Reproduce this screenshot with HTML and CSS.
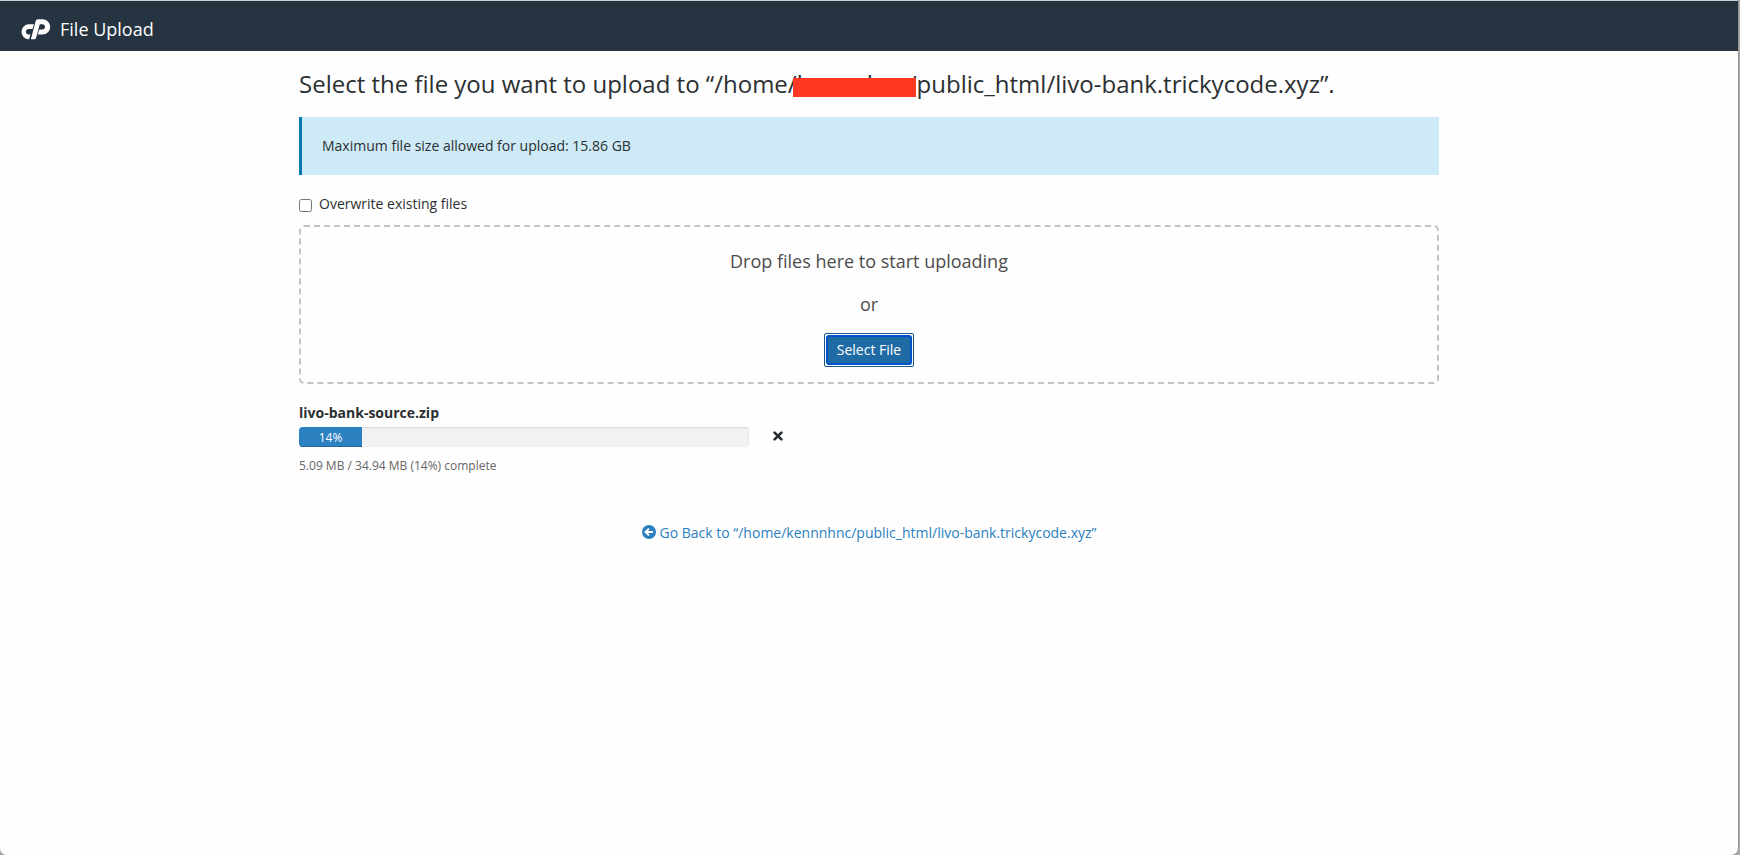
FILE: index.html
```html
<!DOCTYPE html>
<html lang="en">
<head>
<meta charset="utf-8">
<title>File Upload</title>
<link rel="stylesheet" href="styles.css">
</head>
<body>
<div class="window">
  <header class="topbar">
    <svg class="logo" width="31" height="21" viewBox="0 0 31 21" fill="#fff">
      <path d="M8.3 5.2H14L12.8 9.2Q12.5 10.1 11.6 10.1H8.6A2.6 2.6 0 0 0 8.6 15.4H10.4L9.3 19.4Q9 20.3 8.1 20.3A7.6 7.6 0 0 1 8.3 5.2Z"/>
      <path d="M10.9 20.3 15.7 2Q16.2.3 17.9.3H22.6A7.6 7.6 0 0 1 22.6 15.5H17.8L18.9 11.3Q19.1 10.4 20.1 10.4H22.4A2.5 2.5 0 0 0 22.4 5.3H19.8L16.1 18.8Q15.7 20.3 14.2 20.3Z"/>
    </svg>
    <span class="topbar-title">File Upload</span>
  </header>
  <main class="container">
    <h1 class="heading">Select the file you want to upload to “/home/<span class="redacted">kennnhnc</span>/public_html/livo-bank.trickycode.xyz”.</h1>
    <div class="alert">Maximum file size allowed for upload: 15.86 GB</div>
    <label class="overwrite"><input class="checkbox" type="checkbox"><span>Overwrite existing files</span></label>
    <section class="dropzone">
      <p class="drop-text">Drop files here to start uploading</p>
      <p class="drop-text">or</p>
      <button class="select-btn" type="button"><span class="select-face">Select File</span></button>
    </section>
    <section class="upload">
      <div class="filename">livo-bank-source.zip</div>
      <div class="progress-row">
        <div class="progress"><div class="bar" style="width:14%">14%</div></div>
        <svg class="cancel" width="10" height="10" viewBox="0 0 10 10" stroke="#293036" stroke-width="2.7" stroke-linecap="round"><path d="M1.6 1.6l6.8 6.8M8.4 1.6L1.6 8.4"/></svg>
      </div>
      <div class="status">5.09 MB / 34.94 MB (14%) complete</div>
    </section>
    <a class="back">
      <svg class="back-icon" width="14" height="14" viewBox="0 0 14 14"><circle cx="7" cy="7" r="7" fill="#2a7fbf"/><path d="M11 7H4M7 3.6 3.6 7 7 10.4" fill="none" stroke="#fff" stroke-width="2"/></svg>
      <span>Go Back to “/home/kennnhnc/public_html/livo-bank.trickycode.xyz”</span>
    </a>
  </main>
</div>
</body>
</html>
```
FILE: styles.css
```css
* { box-sizing: border-box; }
body { margin: 0; height: 855px; overflow: hidden; background: #a9a9a9; font-family: "Open Sans", sans-serif; font-size: 14px; line-height: 20px; color: #2b2f31; }
.window { height: 855px; width: 1738px; background: #fefefe; border-top: 1px solid #c5cfd2; border-radius: 0 0 7px 7px; box-shadow: 1px 0 0 #989898; }
.topbar { height: 50px; background: #253440; display: flex; align-items: center; gap: 9px; padding: 6px 0 0 20px; color: #fff; }
.logo { display: block; }
.topbar-title { font-size: 18px; line-height: 24px; padding-bottom: 1px; }
.container { width: 1140px; margin-left: 299px; }
.heading { margin: 0; padding-top: 17px; height: 66px; font-size: 24px; line-height: 32px; font-weight: 400; white-space: nowrap; }
.redacted { position: relative; }
.redacted::after { content: ""; position: absolute; left: -4px; top: 11px; width: 123px; height: 19px; background: #ff3824; }
.alert { height: 58px; padding: 19px 20px; background: #cdeaf6; border-left: 3px solid #0077b0; }
.overwrite { display: flex; gap: 7px; height: 50px; padding-top: 19px; }
.checkbox { margin: 5px 0 0; width: 13px; height: 13px; flex: none; }
.dropzone { height: 159px; border: 2px dashed #c4c4c4; border-radius: 5px; display: flex; flex-direction: column; align-items: center; padding-top: 22px; color: #4c4c4c; }
.drop-text { margin: 0 0 18px; font-size: 18px; line-height: 25px; }
.drop-text + .drop-text { margin-bottom: 16px; }
.select-btn { width: 90px; height: 34px; padding: 1px; border: 1px solid #1a5686; border-radius: 2px; background: #fff; color: #fff; font: 14px/20px "Open Sans", sans-serif; }
.select-face { display: block; height: 30px; line-height: 26px; border: 2px solid #0052cc; border-radius: 3px; background: #1f6ba5; }
.upload { padding-top: 19px; height: 127px; }
.filename { font-weight: 700; height: 24px; }
.progress-row { display: flex; align-items: flex-start; gap: 23.5px; }
.progress { width: 450px; height: 20px; border-radius: 4px; overflow: hidden; background: #f2f2f2; box-shadow: inset 0 1px 2px rgba(0,0,0,.12); }
.bar { height: 20px; background: #2c81c0; box-shadow: inset 0 -1px 0 #236699; color: #fff; font-size: 12px; line-height: 21px; text-align: center; }
.cancel { margin-top: 4px; }
.status { font-size: 12px; line-height: 18px; margin-top: 10px; color: #666; }
.back { display: flex; justify-content: center; align-items: center; gap: 4px; margin-top: 12px; color: #2a7fbf; }
.back-icon { margin-bottom: 2px; }
```
